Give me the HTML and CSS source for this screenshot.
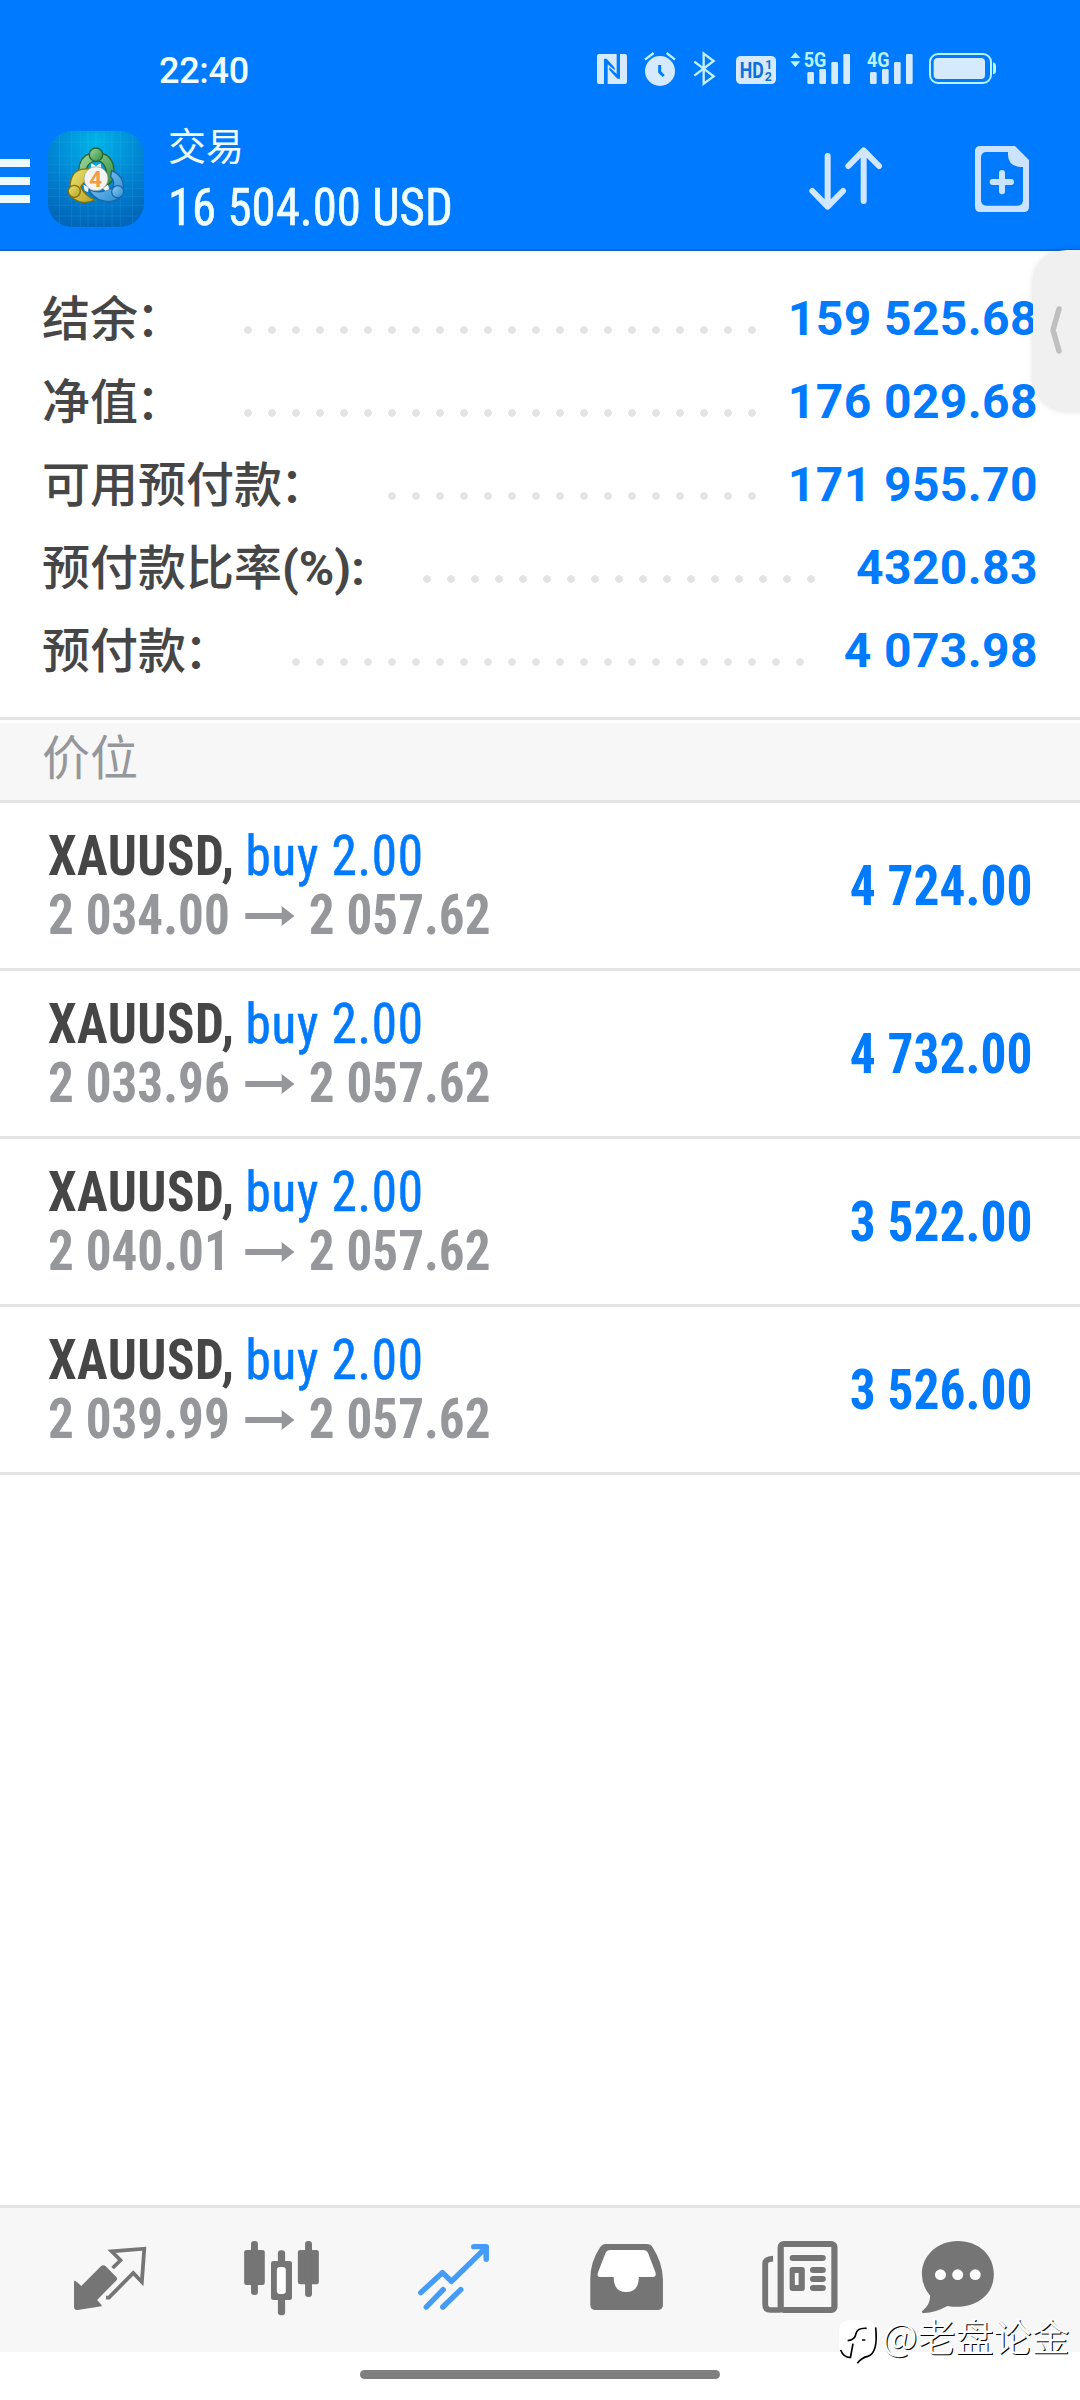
FILE: index.html
```
<!DOCTYPE html>
<html lang="zh-CN">
<head>
<meta charset="utf-8">
<title>交易</title>
<link rel="stylesheet" href="styles.css">
</head>
<body>
<header class="header">
  <div class="status">
    <span class="time">22:40</span>
    <div class="status-icons">
      <svg class="nfc" width="34" height="37" viewBox="105 60 102 111"><path fill="#d6eafd" d="M117 72H170V132L148 112V120L172 146H180V72H195Q201 72 201 78V156Q201 162 195 162H143V103L164 121V113L140 86H132V162H117Q111 162 111 156V78Q111 72 117 72Z"/></svg>
      <svg class="alarm" width="34" height="37" viewBox="249 60 102 111"><circle cx="300" cy="123" r="45" fill="#d6eafd"/><path d="M255 89L281 69M345 89L320 69" stroke="#b9f3fb" stroke-width="7"/><path d="M299 105V126L311 138" fill="none" stroke="#007aff" stroke-width="9"/></svg>
      <svg class="bluetooth" width="23" height="37" viewBox="399 60 69 111"><path fill="none" stroke="#c4f0fc" stroke-width="7" d="M403 95L461 139L431 161V71L461 93L403 137"/></svg>
      <svg class="hd" width="42" height="37" viewBox="525 60 126 111"><rect x="528" y="78" width="120" height="84" rx="14" fill="#d6eafd"/><g fill="#0c6fdc" font-family="Roboto" font-weight="700"><text x="539" y="144" font-size="66" textLength="72" lengthAdjust="spacingAndGlyphs">HD</text><text x="616" y="117" font-size="37">1</text><text x="614" y="152" font-size="37">2</text></g></svg>
      <svg class="sim1" width="62" height="37" viewBox="687 60 186 111"><path fill="#b9f3fb" d="M706 67L721 84H691ZM691 94H721L706 111Z"/><text x="731" y="110" fill="#b9f3fb" font-family="Roboto" font-weight="700" font-size="59" textLength="68" lengthAdjust="spacingAndGlyphs">5G</text><g fill="#d6eafd"><rect x="742" y="126" width="20" height="36" rx="4"/><rect x="778" y="117" width="20" height="45" rx="4"/><rect x="814" y="96" width="20" height="66" rx="4"/><rect x="850" y="72" width="20" height="90" rx="4"/></g></svg>
      <svg class="sim2" width="48" height="37" viewBox="918 60 144 111"><text x="921" y="110" fill="#b9f3fb" font-family="Roboto" font-weight="700" font-size="59" textLength="68" lengthAdjust="spacingAndGlyphs">4G</text><g fill="#d6eafd"><rect x="930" y="126" width="20" height="36" rx="4"/><rect x="966" y="117" width="20" height="45" rx="4"/><rect x="1002" y="96" width="20" height="66" rx="4"/><rect x="1038" y="72" width="20" height="90" rx="4"/></g></svg>
      <svg class="battery" width="69" height="37" viewBox="1104 60 207 111"><rect x="1110" y="72" width="183" height="87" rx="24" fill="none" stroke="#b9f3fb" stroke-width="6"/><rect x="1121" y="84" width="154" height="63" rx="12" fill="#d6eafd"/><path fill="#b9f3fb" d="M1299 97Q1308 99 1308 108V123Q1308 132 1299 133Z"/></svg>
    </div>
  </div>
  <div class="toolbar">
    <div class="menu"><i></i><i></i><i></i></div>
    <svg class="app-icon" width="104" height="106" viewBox="0 0 312 318">
      <defs>
        <radialGradient id="sky" cx=".5" cy=".12" r=".85"><stop offset="0" stop-color="#00b4e8"/><stop offset=".6" stop-color="#0082d2"/><stop offset="1" stop-color="#0068ba"/></radialGradient>
        <linearGradient id="gr" x2="1" y2="1"><stop offset="0" stop-color="#a4dca0"/><stop offset="1" stop-color="#2b8a3c"/></linearGradient>
        <linearGradient id="ye" x2="1" y2="1"><stop offset="0" stop-color="#f0e470"/><stop offset="1" stop-color="#b5a424"/></linearGradient>
        <linearGradient id="bl" x2="1" y2="1"><stop offset="0" stop-color="#8fd2f6"/><stop offset="1" stop-color="#2688d2"/></linearGradient>
      </defs>
      <rect x="12" y="15" width="288" height="288" rx="72" fill="url(#sky)"/>
      <path stroke="#5fd0ff" stroke-opacity=".2" stroke-width="2" d="M47 26V292M83 16V302M109 16V302M132 16V302M156 16V302M180 16V302M204 16V302M229 16V302M265 26V292M28 48H284M13 90H299M12 115H300M12 139H300M12 163H300M12 188H300M12 212H300M13 238H299M28 270H284"/>
      <path d="M107 150Q98 110 124 89Q156 70 190 89Q220 114 205 165L184 182Q196 130 172 108Q150 98 132 118L122 140Z" fill="url(#gr)" stroke="#28652e" stroke-width="4"/>
      <path d="M78 194Q76 138 112 130L136 128L128 160L110 182Q120 206 152 222Q112 240 82 212Z" fill="url(#ye)" stroke="#82720d" stroke-width="4"/>
      <path d="M203 134Q243 151 237 192Q226 236 178 225Q148 218 134 190Q163 203 182 194L206 186Q214 165 200 152Z" fill="url(#bl)" stroke="#1d65a4" stroke-width="4"/>
      <path fill="#f4f7ee" d="M142 112L156 120L170 112L172 128H140ZM118 176L134 184L132 198L122 194ZM192 176L176 186L184 194L196 190Z"/>
      <circle cx="156" cy="86" r="20" fill="url(#gr)" stroke="#28652e" stroke-width="4"/>
      <circle cx="91" cy="196" r="18" fill="url(#ye)" stroke="#82720d" stroke-width="4"/>
      <circle cx="221" cy="197" r="18" fill="url(#bl)" stroke="#1c67aa" stroke-width="4"/>
      <circle cx="156" cy="158" r="36" fill="#f5f4f2" stroke="#8f9c8b" stroke-width="2"/>
      <text x="155" y="182" text-anchor="middle" font-family="Roboto" font-weight="700" font-size="67" fill="#f39a45">4</text>
    </svg>
    <div class="titles">
      <div class="title">交易</div>
      <div class="amount cond">16 504.00 USD</div>
    </div>
    <div class="actions">
      <svg class="sort" width="74" height="66" viewBox="748 348 222 198" fill="none" stroke="#d2e7ff" stroke-width="18" stroke-linecap="round" stroke-linejoin="round"><path d="M804 378V528M758 483L804 530L850 483M912 513V363M866 408L912 361L958 408"/></svg>
      <svg class="add" width="54" height="66" viewBox="1245 348 162 198"><path fill="#cbe3ff" fill-rule="evenodd" d="M1261 348H1365L1407 390V530Q1407 546 1391 546H1261Q1245 546 1245 530V364Q1245 348 1261 348ZM1280 366Q1263 366 1263 383V510Q1263 527 1280 527H1372Q1389 527 1389 510V411H1380Q1344 407 1344 374V366Z"/><path stroke="#cbe3ff" stroke-width="18" stroke-linecap="round" d="M1298 456H1353M1326 429V484"/></svg>
    </div>
  </div>
</header>

<section class="summary">
  <div class="row"><span class="label">结余<i class="colon">：</i></span><span class="dots" style="width:528px"></span><span class="value">159 525.68</span></div>
  <div class="row"><span class="label">净值<i class="colon">：</i></span><span class="dots" style="width:528px"></span><span class="value">176 029.68</span></div>
  <div class="row"><span class="label">可用预付款<i class="colon">：</i></span><span class="dots" style="width:384px"></span><span class="value">171 955.70</span></div>
  <div class="row"><span class="label">预付款比率<b class="unit">(%):</b></span><span class="dots" style="width:408px"></span><span class="value short">4320.83</span></div>
  <div class="row"><span class="label">预付款<i class="colon">：</i></span><span class="dots" style="width:528px"></span><span class="value medium">4 073.98</span></div>
  <div class="drawer"><svg width="12" height="48" viewBox="0 0 12 48"><path d="M9 3L3 24L9 45" fill="none" stroke="#bfbfbf" stroke-width="5.5" stroke-linecap="round" stroke-linejoin="round"/></svg></div>
</section>

<h2 class="section-title">价位</h2>

<main class="positions">
  <article class="position"><div class="info"><div class="line"><b class="cond">XAUUSD,</b><span class="side cond">buy 2.00</span></div><div class="line prices"><span class="cond">2 034.00</span><svg class="arrow" width="53" height="20" viewBox="0 0 50 20" preserveAspectRatio="none"><path d="M0 7H37V0L50 10L37 20V13H0Z"/></svg><span class="cond">2 057.62</span></div></div><span class="profit cond">4 724.00</span></article>
  <article class="position"><div class="info"><div class="line"><b class="cond">XAUUSD,</b><span class="side cond">buy 2.00</span></div><div class="line prices"><span class="cond">2 033.96</span><svg class="arrow" width="53" height="20" viewBox="0 0 50 20" preserveAspectRatio="none"><path d="M0 7H37V0L50 10L37 20V13H0Z"/></svg><span class="cond">2 057.62</span></div></div><span class="profit cond">4 732.00</span></article>
  <article class="position"><div class="info"><div class="line"><b class="cond">XAUUSD,</b><span class="side cond">buy 2.00</span></div><div class="line prices"><span class="cond">2 040.01</span><svg class="arrow" width="53" height="20" viewBox="0 0 50 20" preserveAspectRatio="none"><path d="M0 7H37V0L50 10L37 20V13H0Z"/></svg><span class="cond">2 057.62</span></div></div><span class="profit cond">3 522.00</span></article>
  <article class="position"><div class="info"><div class="line"><b class="cond">XAUUSD,</b><span class="side cond">buy 2.00</span></div><div class="line prices"><span class="cond">2 039.99</span><svg class="arrow" width="53" height="20" viewBox="0 0 50 20" preserveAspectRatio="none"><path d="M0 7H37V0L50 10L37 20V13H0Z"/></svg><span class="cond">2 057.62</span></div></div><span class="profit cond">3 526.00</span></article>
</main>

<nav class="tabs">
  <svg viewBox="69.7 54 499.5 432" preserveAspectRatio="none"><path fill="#757575" d="M215 272Q220 271 236 288L293 229Q300 222 307 229L337 260Q343 266 337 272L282 330L295 345V349L226 360Q215 361 215 351Z"/><path fill="none" stroke="#757575" stroke-width="11" d="M327 234L350 211L324 184L419 176L412 276L387 249L316 323H308"/></svg>
  <svg viewBox="569.2 54 499.5 432" preserveAspectRatio="none"><g fill="#757575"><rect x="709" y="180" width="60" height="105" rx="7"/><rect x="729" y="153" width="20" height="162" rx="9"/><rect x="865" y="180" width="61" height="103" rx="7"/><rect x="886" y="153" width="20" height="168" rx="9"/><rect x="807" y="181" width="21" height="195" rx="9"/><rect x="787" y="213" width="61" height="117" rx="7"/></g><rect x="804" y="231" width="26" height="81" rx="9" fill="#fff"/></svg>
  <svg viewBox="1068.7 54 499.5 432" preserveAspectRatio="none"><path fill="none" stroke="#459cf8" stroke-width="16" stroke-linecap="round" stroke-linejoin="round" d="M1222 308L1285 248L1311 274L1412 172M1376 170H1412V208M1238 351L1287 299M1286 351L1338 299"/></svg>
  <svg viewBox="0 54 499.5 432" preserveAspectRatio="none"><path fill="#757575" d="M190 162H310Q321 162 327 172Q355 217 357 267V345Q357 360 341 360H162Q146 360 146 345V267Q146 216 175 171Q181 162 190 162Z"/><path fill="#fff" d="M204 180H299Q310 180 314 190L335 246Q339 261 328 261H287Q287 306 250 306Q214 306 214 261H176Q163 261 169 246L189 192Q193 180 204 180Z"/></svg>
  <svg viewBox="499.5 54 499.5 432" preserveAspectRatio="none"><rect x="699" y="162" width="156" height="198" rx="9" fill="none" stroke="#757575" stroke-width="18"/><path fill="none" stroke="#757575" stroke-width="17" d="M677 206Q654 207 654 221V342Q654 360 669 360H699"/><g fill="#757575"><rect x="725" y="195" width="105" height="18" rx="9"/><rect x="784" y="231" width="46" height="18" rx="9"/><rect x="784" y="258" width="46" height="18" rx="9"/><rect x="784" y="285" width="46" height="18" rx="9"/><path fill-rule="evenodd" d="M733 231H761Q769 231 769 239V295Q769 303 761 303H733Q725 303 725 295V239Q725 231 733 231ZM740 249V285H751V249Z"/></g></svg>
  <svg viewBox="999 54 499.5 432" preserveAspectRatio="none"><path fill="#757575" d="M1213 153C1275 153 1318 196 1318 253C1318 325 1250 361 1183 348Q1145 370 1113 369Q1105 367 1113 360Q1133 343 1133 317Q1109 288 1109 253C1109 196 1155 153 1213 153Z"/><g fill="#fff"><circle cx="1163" cy="254" r="16"/><circle cx="1213" cy="254" r="16"/><circle cx="1264" cy="254" r="16"/></g></svg>
</nav>
<div class="home"></div>

<div class="watermark">
  <svg width="50" height="50" viewBox="20 20 150 150"><path fill="#fff" d="M52 30H110Q139 33 139 62V110Q137 137 110 141Q92 146 84 160Q80 158 82 141Q28 148 26 108V58Q28 33 52 30Z"/><path fill="none" stroke="#000" stroke-width="5" d="M109 54Q80 52 77 70Q74 89 52 91M95 89H105M68 100L60 143M136 51Q144 129 112 138Q92 143 81 159M31 119Q39 141 60 142"/></svg>
  <span>@老盘论金</span>
</div>
</body>
</html>
```

FILE: styles.css
```
* { box-sizing: border-box; margin: 0; padding: 0; }
body {
  position: relative;
  width: 1080px;
  height: 2400px;
  overflow: hidden;
  display: flex;
  flex-direction: column;
  background: #fff;
  color: #464646;
  font-family: Roboto, "Noto Sans CJK SC", sans-serif;
}
svg { display: block; flex: none; }
.cond { font-stretch: 75%; white-space: nowrap; }

.header { height: 251px; background: #007aff; border-bottom: 2px solid #1267c4; color: #f0fdff; }
.status { display: flex; height: 126px; padding-top: 50px; }
.time { width: 595px; padding-left: 159px; font-size: 36px; font-weight: 500; line-height: 42px; letter-spacing: -0.3px; }
.status-icons { display: flex; }
.alarm { margin-left: 14px; }
.bluetooth { margin-left: 16px; }
.hd { margin-left: 19px; }
.sim1 { margin-left: 12px; }
.sim2 { margin-left: 15px; }
.battery { margin-left: 14px; }
.toolbar { display: flex; height: 123px; }
.menu { width: 30px; margin-right: 14px; padding-top: 33px; display: flex; flex-direction: column; gap: 10px; }
.menu i { height: 8px; background: #ecfaff; }
.titles { padding-left: 20px; width: 661px; }
.title { margin-top: -1px; font-size: 38px; line-height: 44px; }
.amount { margin-top: 9px; font-size: 51px; line-height: 60px; font-weight: 400; -webkit-text-stroke: 0.6px currentColor; transform: scaleX(.958); transform-origin: left; }
.actions { display: flex; padding-top: 20px; }
.add { margin-left: 92px; }

.summary { position: relative; height: 466px; padding: 26px 42px 0 42px; }
.row { display: flex; height: 83px; align-items: flex-start; font-size: 48px; line-height: 83px; font-weight: 500; }
.label { padding-top: 1px; white-space: nowrap; font-weight: 500; }
.colon { font-style: normal; margin-left: -2px; }
.unit { font-weight: 700; }
.dots { height: 12px; margin: 47px 26px 0 auto; background: radial-gradient(circle, #e4e4e4 3.5px, transparent 4.2px) 0 0 / 24px 12px; }
.value { width: 248px; display: flex; justify-content: flex-end; color: #007aff; font-weight: 700; letter-spacing: 0.4px; white-space: nowrap; }
.value.medium { width: 200px; }
.value.short { width: 189px; }
.drawer { position: absolute; left: 1033px; top: -1px; width: 90px; height: 161px; border-radius: 34px; background: #f0f0f0; box-shadow: 0 0 6px rgba(0,0,0,.14); padding: 56px 0 0 17px; }

.section-title { height: 86px; border-top: 3px solid #e4e4e4; border-bottom: 3px solid #e4e4e4; background: #f7f7f7; box-shadow: inset 0 3px #fff; padding-left: 42px; font-size: 48px; line-height: 77px; font-weight: 400; color: #96979b; }

.position { display: flex; justify-content: space-between; height: 168px; border-bottom: 3px solid #e4e4e4; padding: 21px 48px 0 48px; font-size: 55px; }
.line { display: flex; height: 59px; line-height: 65px; transform: scaleX(.93); transform-origin: left; }
.line b { letter-spacing: 0.5px; }
.side { margin-left: 12px; color: #007aff; font-weight: 400; -webkit-text-stroke: 0.6px currentColor; letter-spacing: 0.8px; }
.prices { color: #96979b; font-weight: 700; }
.arrow { margin: 23px 15px 0 17px; fill: #96979b; }
.profit { color: #007aff; font-weight: 700; line-height: 125px; transform: scaleX(.935); transform-origin: right; }

.tabs { display: flex; height: 147px; margin-top: 730px; border-top: 3px solid #e4e4e4; background: #f7f7f7; padding-left: 24px; }
.tabs svg { width: 172px; height: 144px; }
.home { width: 360px; height: 9px; margin: 18px auto 0; border-radius: 5px; background: #7f7f7f; }

.watermark { position: absolute; left: 837px; top: 2317px; display: flex; }
.watermark span { margin: -3px 0 0 -5px; font: 350 38px/42px "Noto Sans CJK SC", sans-serif; color: #fff; text-shadow: 1px 1px 0 #000; }
```
